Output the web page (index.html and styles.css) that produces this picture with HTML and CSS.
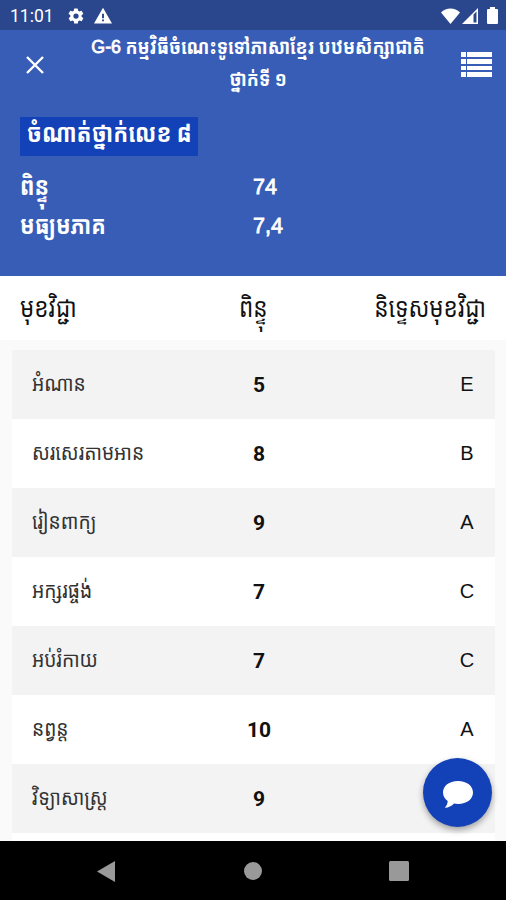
FILE: index.html
```html
<!DOCTYPE html>
<html lang="km">
<head>
    <meta charset="UTF-8">
    <meta name="viewport" content="width=device-width, initial-scale=1.0">
    <title>G-6</title>
    <link rel="stylesheet" href="styles.css">
</head>
<body>

  <div class="status">
    <span class="time">11:01</span>
    <svg class="gear" width="18" height="18" viewBox="0 0 24 24"><path d="M19.4 13a7.500 7.500 0 0 0 0-2l2.100-1.600a.5.5 0 0 0 .1-.6l-2-3.500a.5.5 0 0 0-.6-.2l-2.500 1a7.300 7.300 0 0 0-1.700-1l-.4-2.600a.5.5 0 0 0-.5-.4h-4a.5.5 0 0 0-.5.400L9 5.100a7.700 7.700 0 0 0-1.700 1l-2.500-1a.5.5 0 0 0-.6.200l-2 3.500a.5.5 0 0 0 .1.600L4.500 11a7.900 7.900 0 0 0 0 2l-2.100 1.600a.5.5 0 0 0-.1.600l2 3.500c.1.200.4.300.6.200l2.500-1c.5.400 1.100.7 1.700 1l.4 2.600c0 .2.200.4.500.4h4c.2 0 .5-.2.5-.4l.4-2.600a7.300 7.300 0 0 0 1.700-1l2.500 1c.2.100.5 0 .6-.2l2-3.500a.5.5 0 0 0-.1-.6zM12 15.500a3.500 3.500 0 1 1 0-7 3.500 3.500 0 0 1 0 7z"/></svg>
    <svg class="warn" width="18" height="18" viewBox="0 0 24 24"><path d="M0 22h24L12 1zm13.300-3h-2.600v-2.500h2.600zm0-4h-2.600V9h2.600z" fill-rule="evenodd"/></svg>
    <div class="signals">
      <svg width="19" height="16" viewBox="0 0 19 16"><path d="M9.500 16L0 4.500C2.500 2 6 .5 9.500.5S16.500 2 19 4.500z"/></svg>
      <svg width="17" height="17" viewBox="0 0 17 17"><path d="M0 17L16 1v16zM11.500 7.500v8h3v-11z" fill-rule="evenodd"/></svg>
      <svg class="battery" width="11" height="17" viewBox="0 0 11 17"><path d="M3 0h5v2h2q1 0 1 1v13q0 1-1 1H1q-1 0-1-1V3q0-1 1-1h2z"/></svg>
    </div>
  </div>

  <header>
    <div class="bar">
      <svg class="close" width="18" height="18" viewBox="0 0 18 18"><path d="M1 1l16 16M17 1L1 17"/></svg>
      <h1><span class="latin">G-6</span> <span class="km">កម្មវិធីចំណេះទូទៅភាសាខ្មែរ បឋមសិក្សាជាតិ</span><br><span class="km">ថ្នាក់ទី ១</span></h1>
      <svg class="list" width="31" height="26" viewBox="0 0 31 26"><path d="M0 0h5v5H0zM6 0h25v5H6zM0 7h5v5H0zM6 7h25v5H6zM0 14h5v4H0zM6 14h25v4H6zM0 20h5v5H0zM6 20h25v5H6z"/></svg>
    </div>
    <div class="rank"><span class="km">ចំណាត់ថ្នាក់លេខ ៨</span></div>
    <div class="total"><div class="total-name"><span class="km">ពិន្ទុ</span></div><span class="latin">74</span></div>
    <div class="total"><div class="total-name"><span class="km">មធ្យមភាគ</span></div><span class="latin">7,4</span></div>
  </header>

  <div class="heads">
    <div><span class="km">មុខវិជ្ជា</span></div>
    <div><span class="km">ពិន្ទុ</span></div>
    <div><span class="km">និទ្ទេសមុខវិជ្ជា</span></div>
  </div>

  <main>
    <div class="row"><div class="name"><span class="km">អំណាន</span></div><b>5</b><span class="grade">E</span></div>
    <div class="row"><div class="name"><span class="km">សរសេរតាមអាន</span></div><b>8</b><span class="grade">B</span></div>
    <div class="row"><div class="name"><span class="km">រៀនពាក្យ</span></div><b>9</b><span class="grade">A</span></div>
    <div class="row"><div class="name"><span class="km">អក្សរផ្ចង់</span></div><b>7</b><span class="grade">C</span></div>
    <div class="row"><div class="name"><span class="km">អប់រំកាយ</span></div><b>7</b><span class="grade">C</span></div>
    <div class="row"><div class="name"><span class="km">នព្វន្ត</span></div><b>10</b><span class="grade">A</span></div>
    <div class="row"><div class="name"><span class="km">វិទ្យាសាស្ត្រ</span></div><b>9</b></div>
    <div class="row"></div>
  </main>

  <!-- chat button -->
  <div class="chat">
    <svg width="32" height="28" viewBox="0 0 32 28"><path d="M16 0C7 0 1 5 1 11.500c0 3.500 1.800 6.500 4.700 8.600C5.600 23 4.500 25 2.800 26.700c3.700 0 7-1.600 9.200-4.200 1.300.3 2.600.4 4 .4 9 0 15-4.900 15-11.400S25 0 16 0z"/></svg>
  </div>

  <nav>
    <svg width="18" height="21" viewBox="0 0 18 21"><path d="M18 0v21L0 10.500z"/></svg>
    <svg width="18" height="18" viewBox="0 0 18 18"><circle cx="9" cy="9" r="9"/></svg>
    <svg width="20" height="20" viewBox="0 0 20 20"><rect width="20" height="20" rx="1.500"/></svg>
  </nav>

</body>
</html>
```
FILE: styles.css
```css
* {
  margin: 0;
  padding: 0;
  box-sizing: border-box;
}
body {
  display: flex;
  flex-direction: column;
  height: 900px;
  overflow: hidden;
  background-color: #fafafa;
  color: #111;
  font-family: Roboto, "Noto Sans Khmer", "Khmer OS Battambang", "Noto Sans", "DejaVu Sans", sans-serif;
}
svg {
  display: block;
  flex: none;
  fill: white;
}
/* tall, narrow khmer letters */
.km {
  display: inline-block;
  transform: scaleY(1.17);
}
.latin {
  font-family: "Liberation Sans", sans-serif;
  font-weight: normal;
  -webkit-text-stroke: 0.8px white;
}
.status {
  display: flex;
  align-items: center;
  height: 30px;
  padding: 1px 8px 0 10px;
  background-color: #2a468c;
  color: white;
}
.time {
  width: 57px;
  font-size: 17.5px;
}
.warn {
  margin-left: 9px;
}
.signals {
  display: flex;
  align-items: center;
  gap: 2px;
  margin-left: auto;
}
.battery {
  margin-left: 6px;
}

header {
  height: 246px;
  background-color: #385db7;
  color: white;
  font-weight: bold;
}
.bar {
  display: flex;
  align-items: center;
  height: 69px;
  padding: 0 14px 0 26px;
}
.close {
  fill: none;
  stroke: white;
  stroke-width: 2.4;
}
h1 {
  flex: 1;
  padding: 0 0 4px 11px;
  font-size: 17.8px;
  line-height: 31px;
  text-align: center;
  white-space: nowrap;
}
.rank {
  height: 39px;
  width: 178px;
  margin: 18px 0 11px 20px;
  padding-left: 7px;
  background-color: #1341b7;
  font-size: 22px;
  line-height: 34px;
  white-space: nowrap;
}
.total {
  display: flex;
  height: 39px;
  padding-left: 20px;
  font-size: 21.5px;
  line-height: 39px;
}
.total .latin {
  padding-top: 1px;
}
.total-name {
  width: 233px;
}

.heads {
  display: grid;
  grid-template-columns: 219px 40px 1fr;
  flex: none;
  height: 64px;
  padding: 0 20px;
  background-color: white;
  font-size: 22.5px;
  line-height: 64px;
  white-space: nowrap;
}
.heads div:last-child {
  text-align: right;
}

main {
  flex: 1;
  min-height: 0;
  padding: 10px 11px 0 12px;
  overflow: hidden;
}
.row {
  display: grid;
  grid-template-columns: 207px 40px 1fr 16px;
  align-items: center;
  height: 69px;
  padding: 0 20px;
  background-color: white;
}
.row:nth-child(odd) {
  background-color: #f3f3f3;
}
.name {
  padding-bottom: 4px;
  font-size: 19.2px;
  color: #333;
}
.name .km {
  transform: scaleY(1.1);
}
.row b {
  font-size: 21px;
  text-align: center;
}
.grade {
  grid-column: 4;
  padding-bottom: 1px;
  font-family: "Liberation Sans", sans-serif;
  font-size: 20px;
  text-align: center;
}

.chat {
  position: absolute;
  left: 423px;
  top: 758px;
  display: flex;
  align-items: center;
  justify-content: center;
  width: 69px;
  height: 69px;
  border-radius: 50%;
  background-color: #1341b7;
  box-shadow: 0 3px 6px rgba(0, 0, 0, 0.35);
}
.chat svg {
  margin-top: 5px;
}

nav {
  display: flex;
  align-items: center;
  justify-content: space-between;
  flex: none;
  height: 59px;
  padding: 1px 97px 0;
  background-color: black;
}
nav svg {
  fill: #999;
}
nav svg:nth-child(2) {
  margin-left: 2px;
}
```
